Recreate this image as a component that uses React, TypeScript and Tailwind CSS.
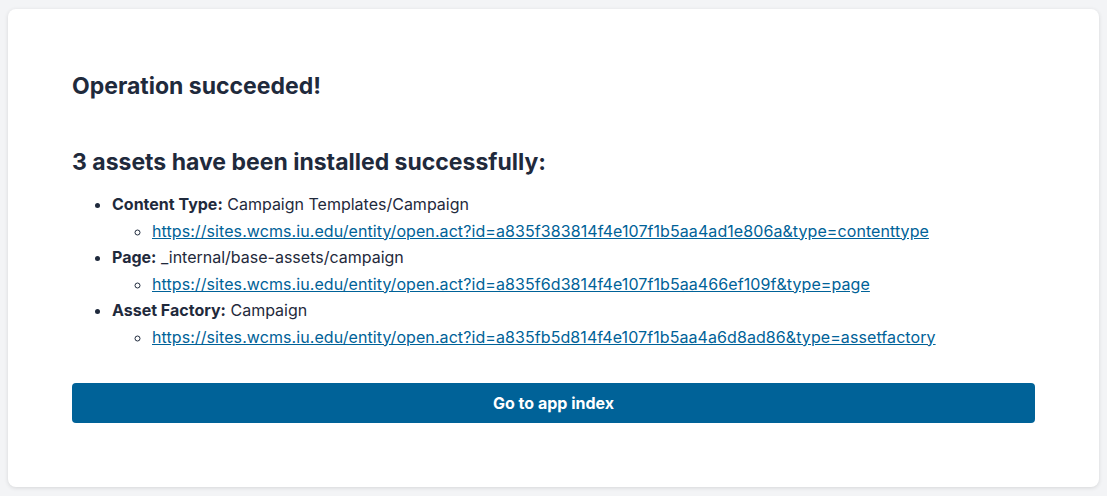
import React from 'react';

type Asset = { label: string; path: string; url: string };

const assets: Asset[] = [
  {
    label: 'Content Type:',
    path: 'Campaign Templates/Campaign',
    url: 'https://sites.wcms.iu.edu/entity/open.act?id=a835f383814f4e107f1b5aa4ad1e806a&type=contenttype',
  },
  {
    label: 'Page:',
    path: '_internal/base-assets/campaign',
    url: 'https://sites.wcms.iu.edu/entity/open.act?id=a835f6d3814f4e107f1b5aa466ef109f&type=page',
  },
  {
    label: 'Asset Factory:',
    path: 'Campaign',
    url: 'https://sites.wcms.iu.edu/entity/open.act?id=a835fb5d814f4e107f1b5aa4a6d8ad86&type=assetfactory',
  },
];

const App: React.FC = () => {
  return (
    <div className="min-h-screen bg-[#f3f4f6] px-2 pt-[9px] pb-[9px] font-['Inter','Liberation_Sans',sans-serif] text-[#1f2a3c]">
      <div className="rounded-lg bg-white px-16 pt-[63px] pb-16 shadow-[0_1px_4px_rgba(0,0,0,0.12)]">
        <h1 className="text-[23px] font-bold leading-[28px]">Operation succeeded!</h1>
        <h2 className="mt-12 text-[23px] font-bold leading-[28px]">3 assets have been installed successfully:</h2>

        <ul className="mt-[15px] list-disc pl-10 text-[16px] leading-[26.5px]">
          {assets.map((a) => (
            <li key={a.url}>
              <strong className="font-bold">{a.label}</strong> {a.path}
              <ul className="list-[circle] pl-10">
                <li>
                  <a href="#" className="text-[#006298] underline tracking-[0.08px]">
                    {a.url}
                  </a>
                </li>
              </ul>
            </li>
          ))}
        </ul>

        <button className="mt-[33px] h-10 w-full rounded-[4px] bg-[#006298] text-[16px] font-bold text-white">
          Go to app index
        </button>
      </div>
    </div>
  );
};

export default App;
